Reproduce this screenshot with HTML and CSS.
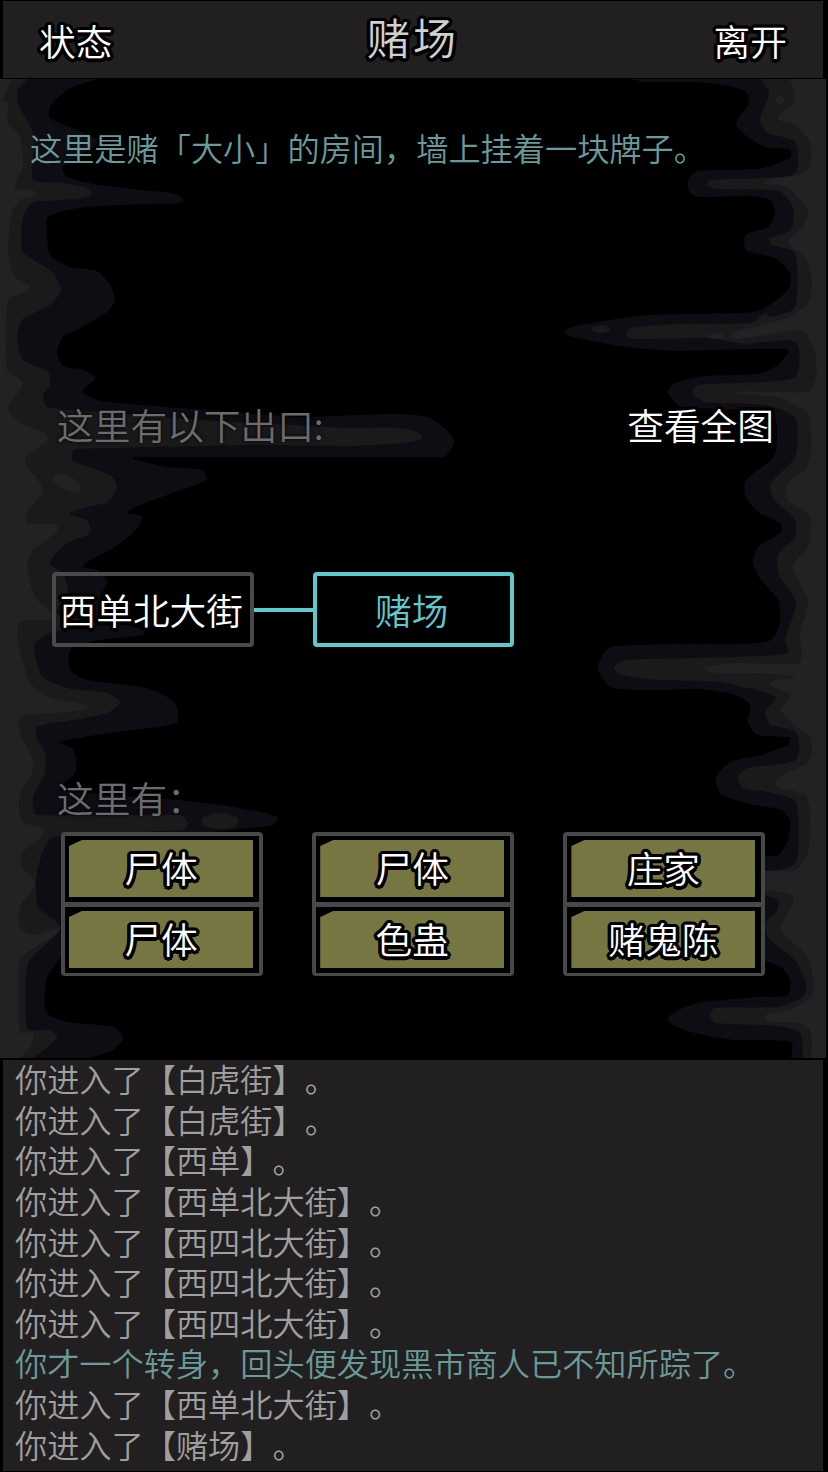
FILE: index.html
```html
<!DOCTYPE html>
<html lang="zh-CN">
<head>
    <meta charset="UTF-8">
    <meta name="viewport" content="width=device-width, initial-scale=1.0">
    <title>赌场</title>
    <link rel="stylesheet" href="styles.css">
</head>
<body>
    <div class="game">
        <header class="topbar">
            <span class="label">状态</span>
            <h1 class="title">赌场</h1>
            <span class="label">离开</span>
        </header>

        <main class="room">
            <svg class="cave" id="cave" viewBox="0 79 828 979"></svg>
            <div class="content">
                <p class="desc">这里是赌「大小」的房间，墙上挂着一块牌子。</p>

                <div class="heading exits">
                    <span class="hint">这里有以下出口:</span>
                    <span class="label">查看全图</span>
                </div>
                <div class="map">
                    <div class="node">西单北大街</div>
                    <div class="link"></div>
                    <div class="node current">赌场</div>
                </div>

                <div class="heading">
                    <span class="hint">这里有：</span>
                </div>
                <div class="groups">
                    <div class="group">
                        <div class="cell"><div class="item">尸体</div></div>
                        <div class="cell"><div class="item">尸体</div></div>
                    </div>
                    <div class="group">
                        <div class="cell"><div class="item">尸体</div></div>
                        <div class="cell"><div class="item">色蛊</div></div>
                    </div>
                    <div class="group">
                        <div class="cell"><div class="item">庄家</div></div>
                        <div class="cell"><div class="item">赌鬼陈</div></div>
                    </div>
                </div>
            </div>
        </main>

        <section class="log">
            <p>你进入了【白虎街】。</p>
            <p>你进入了【白虎街】。</p>
            <p>你进入了【西单】。</p>
            <p>你进入了【西单北大街】。</p>
            <p>你进入了【西四北大街】。</p>
            <p>你进入了【西四北大街】。</p>
            <p>你进入了【西四北大街】。</p>
            <p class="event">你才一个转身，回头便发现黑市商人已不知所踪了。</p>
            <p>你进入了【西单北大街】。</p>
            <p>你进入了【赌场】。</p>
        </section>
    </div>

    <script src="cave.js"></script>
</body>
</html>
```

FILE: styles.css
```css
body {
    margin: 0;
    background: #000;
    font-family: "Noto Sans CJK SC", sans-serif;
    font-weight: 350;
    text-spacing-trim: space-all;
}
p, h1 {
    margin: 0;
    font-weight: inherit;
}
.game {
    display: flex;
    flex-direction: column;
    width: 828px;
    height: 1472px;
    overflow: hidden;
}
.topbar {
    display: flex;
    justify-content: space-between;
    align-items: center;
    box-sizing: border-box;
    height: 77px;
    margin: 1px 5px 1px 3px;
    padding: 1px 36px 0 36px;
    background: #221f20;
}
/* round black outline */
.label, .title, .node, .item {
    text-shadow:
        3.5px 0 0.5px #000, -3.5px 0 0.5px #000,
        0 3.5px 0.5px #000, 0 -3.5px 0.5px #000,
        3.2px 1.3px 0.5px #000, -3.2px 1.3px 0.5px #000,
        3.2px -1.3px 0.5px #000, -3.2px -1.3px 0.5px #000,
        2.5px 2.5px 0.5px #000, -2.5px 2.5px 0.5px #000,
        2.5px -2.5px 0.5px #000, -2.5px -2.5px 0.5px #000,
        1.3px 3.2px 0.5px #000, -1.3px 3.2px 0.5px #000,
        1.3px -3.2px 0.5px #000, -1.3px -3.2px 0.5px #000,
        1.5px 1.5px 0.5px #000, -1.5px -1.5px 0.5px #000;
}
.label {
    font-size: 36.7px;
    line-height: 48px;
    color: #fff;
}
.title {
    padding-bottom: 9px;
    font-size: 43px;
    line-height: 54px;
    letter-spacing: 3px;
    color: #d0d0d0;
}

/* room */
.room {
    display: grid;
    height: 979px;
}
.cave, .content {
    grid-area: 1 / 1;
}
.cave {
    width: 828px;
    height: 979px;
}
.content {
    z-index: 1;
}
.desc {
    height: 297px;
    padding: 44px 0 0 30px;
    font-size: 32.2px;
    line-height: 48px;
    box-sizing: border-box;
    color: #6a9a99;
}
.heading {
    display: flex;
    justify-content: space-between;
    height: 48px;
    padding: 0 54px 0 57px;
}
.exits {
    margin-top: 24px;
}
.hint {
    font-size: 36.7px;
    line-height: 49px;
    color: #6c6c6c;
    text-shadow: 0 0 4px #000;
}
.map {
    display: flex;
    align-items: center;
    height: 75px;
    margin: 124px 0 126px 52px;
}
.node {
    box-sizing: border-box;
    width: 201.5px;
    height: 75px;
    border: 4px solid #4a4a4a;
    border-radius: 4px;
    font-size: 36.7px;
    line-height: 66px;
    text-align: center;
    text-indent: -3px;
    white-space: nowrap;
    color: #fff;
}
.node.current {
    border-color: #5ec9cd;
    color: #5ec9cd;
}
.link {
    width: 59px;
    height: 4px;
    background: #5ec9cd;
}
.groups {
    display: flex;
    gap: 49.2px;
    margin: 11px 0 0 61px;
}
.group {
    box-sizing: border-box;
    width: 202px;
    height: 144px;
    border: 4px solid #484848;
    border-radius: 4px;
    background: #484848;
    display: flex;
    flex-direction: column;
    gap: 5px;
}
.cell {
    flex: 1;
    padding: 4px 6px 5px 4px;
    background: #000;
}
.item {
    height: 57px;
    background: #767642;
    clip-path: polygon(0 6px, 13px 0, 100% 0, 100% 100%, 0 100%);
    font-size: 36.7px;
    line-height: 55px;
    text-align: center;
    color: #fff;
}

/* message log */
.log {
    box-sizing: border-box;
    height: 411px;
    margin: 2px 5px 0 3px;
    padding-left: 12px;
    background: #221f20;
    font-size: 32.2px;
    line-height: 40.65px;
    color: #9f9f9f;
}
.log p {
    height: 40.65px;
    margin-top: -2px;
    margin-bottom: 2px;
}
.log .event {
    color: #6a9a99;
}
```

FILE: cave.js
```js
// Rock walls: every wall is three outlines, from the deepest shade to the nearest one
const walls = [
    { fill: '#0e0d14', side: 0, pts: '97,79 67,90 50,107 50,118 77,130 97,142 80,155 63,167 67,177 100,185 140,190 183,199 147,204 97,206 67,210 48,217 47,230 50,255 70,267 97,271 110,285 115,300 107,312 77,330 63,337 57,352 63,366 83,370 95,378 83,391 97,400 140,405 300,417 393,414 430,418 454,440 443,457 134,457 133,459 167,467 202,470 206,480 167,495 127,512 142,517 133,533 110,550 83,566 97,570 107,582 100,597 100,615 143,630 143,635 100,640 73,647 68,657 72,672 87,680 147,688 175,703 176,723 110,733 60,742 72,748 76,760 75,773 60,790 180,800 233,807 278,817 273,825 200,833 100,837 72,850 62,880 70,920 65,950 50,972 46,980 46,1012 67,1022 113,1027 123,1038 113,1050 90,1058' },
    { fill: '#1a1a1b', side: 0, pts: '28,79 18,90 18,103 33,133 33,163 33,180 63,183 92,193 60,200 32,203 23,217 21,237 23,252 53,273 61,290 50,305 22,320 17,340 23,360 48,372 50,385 43,395 47,407 100,412 200,420 350,428 400,428 422,437 400,443 350,446 250,445 76,449 72,460 110,475 117,487 107,502 70,513 87,520 90,533 67,543 50,563 63,573 68,593 57,613 83,623 50,633 35,643 35,657 43,677 67,688 107,693 120,702 107,713 73,720 37,727 37,738 45,753 45,773 33,797 37,815 180,815 188,823 183,830 53,837 37,873 38,907 60,928 28,963 27,1028 50,1030 57,1038 33,1058' },
    { fill: '#202224', side: 0, pts: '12,79 3,100 8,103 8,123 20,137 23,167 15,187 37,193 20,200 12,213 8,253 15,277 30,288 8,300 7,370 23,383 8,408 20,423 48,437 25,459 43,490 27,512 27,523 58,527 33,550 27,567 35,597 53,617 20,622 18,640 30,683 50,698 88,707 67,712 20,717 20,733 33,760 32,773 20,793 22,822 45,830 22,853 22,867 35,883 20,907 20,927 33,935 60,930 20,960 20,1032 33,1033 30,1047 20,1058' },
    { fill: '#0e0d14', side: 826, pts: '631,79 645,82 708,83 745,91 749,103 736,123 745,135 765,147 790,150 790,158 758,169 698,171 688,180 690,193 698,197 748,196 770,200 775,213 768,227 746,235 746,250 775,258 790,273 788,290 761,310 741,313 648,315 598,322 565,332 588,340 635,348 681,351 788,349 778,365 758,374 705,376 675,383 668,392 678,405 688,408 765,411 776,420 776,450 771,460 746,480 745,495 758,512 780,523 781,532 758,547 753,563 761,580 778,600 780,623 771,640 741,644 681,644 611,647 598,667 611,687 651,690 701,689 735,695 750,705 748,723 758,735 790,738 788,745 761,755 731,762 716,777 720,793 745,803 781,810 790,820 788,840 778,855 758,857 700,870 700,900 740,950 781,967 790,980 788,995 758,997 698,1003 668,1019 691,1032 735,1040 791,1042 791,1058' },
    { fill: '#1a1a1b', side: 826, pts: '761,79 769,93 760,120 768,133 795,142 795,173 761,178 711,180 707,185 718,189 778,191 793,207 791,230 770,238 771,245 795,253 795,307 771,317 765,313 751,323 681,324 631,328 626,335 635,339 708,338 745,344 795,342 795,377 741,383 698,385 692,393 705,402 765,405 795,418 795,457 771,483 773,498 795,520 795,537 778,555 779,575 796,603 785,640 788,653 735,657 625,660 614,668 621,675 658,680 721,682 775,697 765,712 771,725 796,732 796,760 748,768 738,777 743,788 768,792 796,802 796,862 758,877 758,893 778,900 776,913 766,922 768,937 795,960 805,980 805,995 778,1007 715,1008 710,1015 715,1023 778,1026 800,1033 803,1058' },
    { fill: '#202224', side: 826, pts: '790,79 795,100 778,118 796,125 810,143 810,167 798,175 765,182 786,187 808,210 803,227 788,243 805,257 812,280 808,303 788,318 731,337 801,330 815,353 816,377 808,392 738,392 781,398 808,415 811,453 805,470 788,483 788,500 810,517 808,547 793,567 808,600 800,633 799,663 735,663 706,670 748,673 795,677 770,683 791,695 781,710 795,725 810,737 812,753 808,763 775,783 805,795 810,813 808,853 795,870 761,872 761,888 793,897 781,930 808,957 813,993 795,1008 765,1018 801,1023 811,1033 811,1058' }
];

// Loose stones: cx, cy, rx, ry, angle
const stones = [
    ['#1a1a1b', 220, 821, 19, 8, 0],
    ['#202224', 67, 483, 15, 7, 25],
    ['#1a1a1b', 601, 329, 9, 4, 0],
    ['#202224', 716, 336, 7, 3, 0],
    ['#202224', 780, 100, 4, 5, 0]
];

function round(n) {
    return Math.round(n * 10) / 10;
}

// Smooth line through all points
function outline(pts, side) {
    let d = `M${side},79 L${pts[0]}`;
    for (let i = 0; i < pts.length - 1; i++) {
        const a = pts[i - 1] || pts[i];
        const b = pts[i];
        const c = pts[i + 1];
        const e = pts[i + 2] || c;
        // handles are kept short so that uneven gaps do not make loops
        const len = Math.min(Math.hypot(c[0] - b[0], c[1] - b[1]), 40);
        const l1 = Math.hypot(c[0] - a[0], c[1] - a[1]) || 1;
        const l2 = Math.hypot(e[0] - b[0], e[1] - b[1]) || 1;
        const x1 = round(b[0] + (c[0] - a[0]) / l1 * len * 0.22);
        const y1 = round(b[1] + (c[1] - a[1]) / l1 * len * 0.22);
        const x2 = round(c[0] - (e[0] - b[0]) / l2 * len * 0.22);
        const y2 = round(c[1] - (e[1] - b[1]) / l2 * len * 0.22);
        d += ` C${x1},${y1} ${x2},${y2} ${c}`;
    }
    return d + ` L${side},1058 Z`;
}

let shapes = '';
walls.forEach(wall => {
    const pts = wall.pts.split(' ').map(p => p.split(',').map(Number));
    shapes += `<path fill="${wall.fill}" d="${outline(pts, wall.side)}"/>`;
});
stones.forEach(([fill, cx, cy, rx, ry, angle]) => {
    shapes += `<ellipse fill="${fill}" cx="${cx}" cy="${cy}" rx="${rx}" ry="${ry}" transform="rotate(${angle} ${cx} ${cy})"/>`;
});
document.getElementById('cave').innerHTML = shapes;
```
